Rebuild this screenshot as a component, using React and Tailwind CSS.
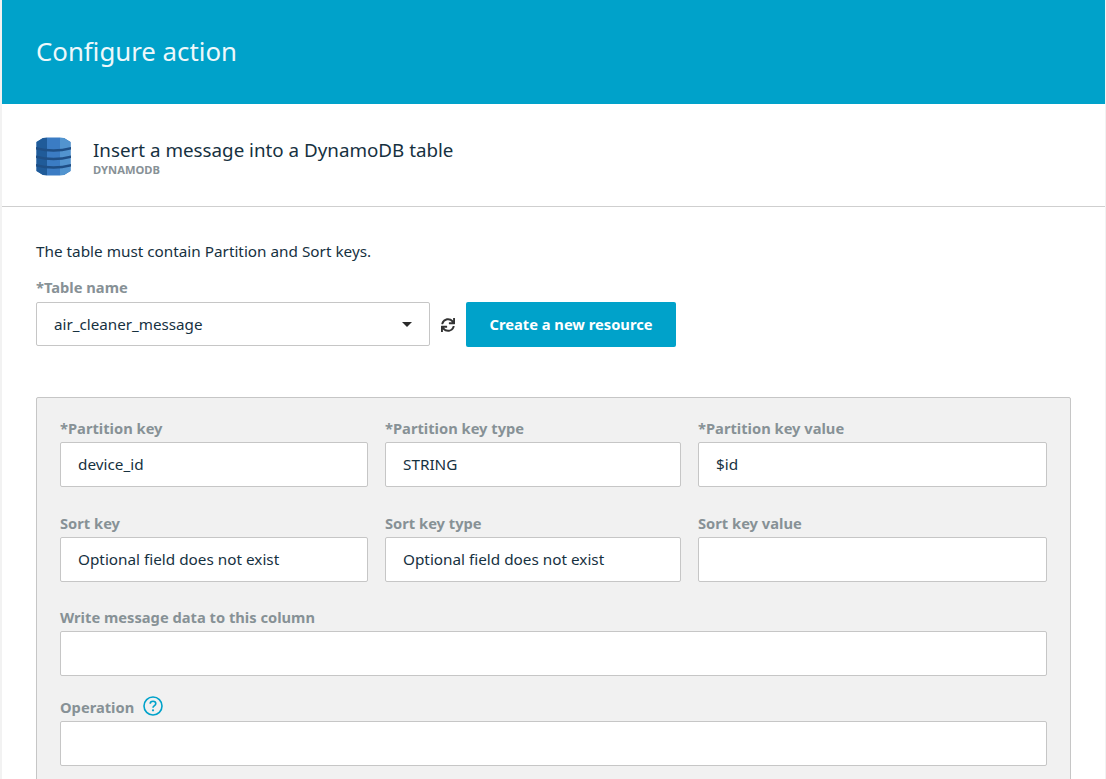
import React from "react";
import { FaSync } from "react-icons/fa";

function Field({ label, value, className = "" }) {
  return (
    <div className={`flex flex-col ${className}`}>
      <div className="h-[20px] text-[14.7px] leading-[20px] font-bold text-[#879196] mb-[4px]">{label}</div>
      <div className="h-[45px] bg-white border border-[#c6c6c6] rounded-[2px] pl-[17px] flex items-center text-[15.3px] text-[#16313f]">{value}</div>
    </div>
  );
}

function DynamoIcon() {
  return (
    <svg className="mt-[2px]" width="35" height="39" viewBox="0 0 35 39">
      <path d="M7 1 L28 1 L34.5 5 L34.5 34 L28 38 L7 38 L0.5 34 L0.5 5 Z" fill="#2e73b8" />
      <path d="M11 0.5 H24 V38.5 H11 Z" fill="#3b7cc4" />
      <path d="M24 0.5 L28 1 L34.5 5 V34 L28 38 L24 38.5 Z" fill="#5294cf" />
      <path d="M0.5 5 L7 1 L11 0.5 V38.5 L7 38 L0.5 34 Z" fill="#205b99" />
      <path d="M0 10 Q17.5 14.5 35 10 V12.5 Q17.5 17 0 12.5 Z" fill="#1f4f86" />
      <path d="M0 18.5 Q17.5 23 35 18.5 V21 Q17.5 25.5 0 21 Z" fill="#1f4f86" />
      <path d="M0 27 Q17.5 31.5 35 27 V29.5 Q17.5 34 0 29.5 Z" fill="#1f4f86" />
    </svg>
  );
}

export default function App() {
  return (
    <div className="w-[1106px] h-[779px] overflow-hidden bg-[#f2f2f2] pl-[2px] pr-[1px] font-['Noto_Sans','Open_Sans',sans-serif]">
      <div className="bg-white h-full">
        <header className="h-[104px] bg-[#00a2ca] flex items-center pl-[34px] pb-[1px] text-[25.8px] text-[#eef8fb]">Configure action</header>
        <section className="h-[103px] border-b border-[#cfcfcf] flex items-center pl-[34px]">
          <DynamoIcon />
          <div className="ml-[22px] mt-[5px]">
            <div className="text-[18.8px] leading-[24px] text-[#16313f]">Insert a message into a DynamoDB table</div>
            <div className="text-[11.2px] leading-[14px] font-bold text-[#879196] mt-[1px]">DYNAMODB</div>
          </div>
        </section>
        <main className="pl-[34px] pr-[34px]">
          <p className="mt-[34px] h-[20px] text-[15.3px] leading-[20px] text-[#16313f]">The table must contain Partition and Sort keys.</p>
          <div className="mt-[16px] h-[20px] text-[14.7px] leading-[20px] font-bold text-[#879196]">*Table name</div>
          <div className="mt-[5px] flex items-start">
            <div className="w-[394px] h-[44px] bg-white border border-[#c6c6c6] rounded-[2px] pl-[17px] pr-[17px] flex items-center justify-between text-[15.2px] text-[#16313f]">
              <span>air_cleaner_message</span>
              <span className="w-0 h-0 border-x-[5px] border-x-transparent border-t-[5px] border-t-[#2a2a2a]" />
            </div>
            <FaSync size={14} className="ml-[11px] mt-[16px] text-[#333333]" />
            <button className="ml-[11px] w-[210px] h-[45px] bg-[#00a2ca] rounded-[2px] text-[14.7px] font-bold text-white">Create a new resource</button>
          </div>
          <div className="mt-[50px] h-[420px] bg-[#f1f1f1] border border-[#c6c6c6] rounded-[2px] pt-[20px] pl-[23px] pr-[23px]">
            <div className="grid grid-cols-[308px_296px_349px] gap-x-[17px] gap-y-[26px]">
              <Field label="*Partition key" value="device_id" />
              <Field label="*Partition key type" value="STRING" />
              <Field label="*Partition key value" value="$id" />
              <Field label="Sort key" value="Optional field does not exist" />
              <Field label="Sort key type" value="Optional field does not exist" />
              <Field label="Sort key value" value="" />
            </div>
            <div className="mt-[25px]">
              <Field label="Write message data to this column" value="" />
            </div>
            <div className="mt-[21px] flex flex-col">
              <div className="h-[20px] mb-[4px] pt-[1px] flex items-center text-[14.7px] font-bold text-[#879196]">
                Operation
                <svg className="ml-[9px] -mt-[4px]" width="20" height="20" viewBox="0 0 20 20" fill="none">
                  <circle cx="10" cy="10" r="9" stroke="#00a2ca" strokeWidth="1.6" />
                  <path d="M7.2 7.8 C7.2 6.3 8.5 5.3 10 5.3 C11.6 5.3 12.8 6.3 12.8 7.7 C12.8 9.6 10 9.6 10 11.8" stroke="#00a2ca" strokeWidth="1.6" />
                  <circle cx="10" cy="14.3" r="1.1" fill="#00a2ca" />
                </svg>
              </div>
              <div className="h-[45px] bg-white border border-[#c6c6c6] rounded-[2px]" />
            </div>
          </div>
        </main>
      </div>
    </div>
  );
}
